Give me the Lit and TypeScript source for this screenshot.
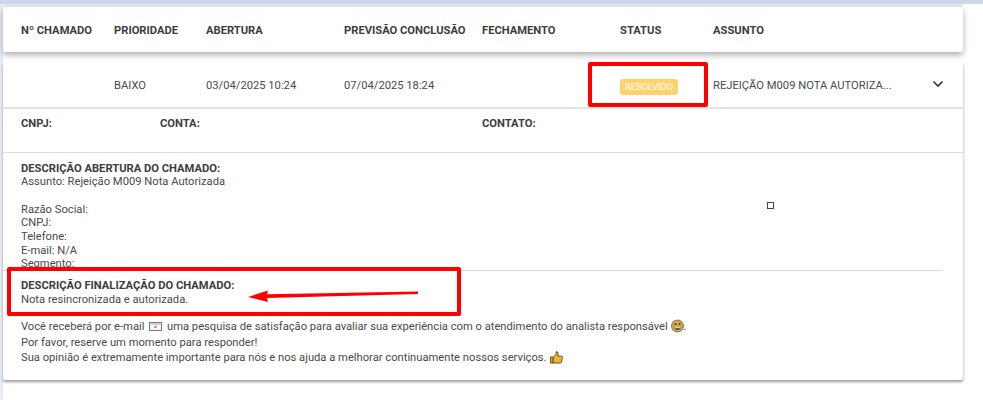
import { LitElement, html, css, svg } from "lit";
import { customElement } from "lit/decorators.js";

const COLS = [
  { label: "Nº CHAMADO", value: "" },
  { label: "PRIORIDADE", value: "BAIXO" },
  { label: "ABERTURA", value: "03/04/2025 10:24" },
  { label: "PREVISÃO CONCLUSÃO", value: "07/04/2025 18:24" },
  { label: "FECHAMENTO", value: "" },
];

@customElement("app-root")
export class AppRoot extends LitElement {
  static styles = css`
    :host {
      display: block;
      position: relative;
      width: 983px;
      height: 400px;
      overflow: hidden;
      background: #fff;
      font-family: Roboto, "Liberation Sans", sans-serif;
      font-size: 11.2px;
      color: #4a4a4a;
    }
    .top { height: 4px; background: #cdd7e7; }
    .sub { height: 3px; margin-right: 20px; background: #e6ebf3; }
    .wrap {
      width: 960px;
      padding-left: 3px;
      background: linear-gradient(#e8edf5, #e8edf5) left / 3px 100% no-repeat;
      padding-bottom: 25px;
    }
    .card { background: #fff; border-radius: 2px; }
    .head {
      height: 45px;
      box-shadow: 0 3px 6px rgba(0, 0, 0, 0.32);
      position: relative;
    }
    .grid {
      display: grid;
      grid-template-columns: 93px 92px 138px 138px 138px 93px 1fr;
      padding-left: 18px;
      align-items: center;
      height: 100%;
    }
    .head .grid { font-weight: 700; color: #3d3d3d; padding-top: 1px; box-sizing: border-box; }
    .gap { height: 10px; }
    .body { box-shadow: 0 2px 3px rgba(0, 0, 0, 0.4); height: 318px; }
    .row { height: 45px; border-bottom: 2px solid #e4e4e4; box-sizing: content-box; }
    .row .cell { padding-top: 1px; }
    .subject { display: flex; align-items: center; justify-content: space-between; padding-right: 19px; }
    .badge {
      display: inline-block;
      background: #ffd36b;
      color: #fff;
      border-radius: 3px;
      font-size: 9.3px;
      line-height: 16px;
      padding: 0 5px;
      margin-top: 3px;
    }
    .chev { width: 12px; height: 8px; display: block; margin-top: -3px; }
    .info {
      border-bottom: 1px solid #dcdcdc;
      display: grid;
      grid-template-columns: 139px 322px 1fr;
      padding: 8px 0 0 18px;
      box-sizing: border-box;
      height: 44px;
      font-weight: 700;
      color: #3d3d3d;
      line-height: 14px;
    }
    .desc { padding: 8.5px 0 0 18px; line-height: 13.7px; height: 117px; box-sizing: border-box; }
    .t { font-weight: 700; color: #3d3d3d; }
    .rule { height: 1px; width: 940px; background: #dcdcdc; }
    .final { padding: 8px 0 0 18px; line-height: 14px; height: 45px; box-sizing: border-box; }
    .msg { padding: 3px 0 0 18px; line-height: 15.5px; }
    .msg svg { vertical-align: 1px; margin: -4px 0; }
    .msg svg.thumb { margin-left: 1px; }
    .msg svg.mail { vertical-align: -1px; margin: 0 2px; width: 13px; height: 9px; }
    .box {
      position: absolute;
      border: 4px solid #f00;
      border-radius: 2px;
      box-sizing: border-box;
    }
    .b1 { left: 588px; top: 62px; width: 120px; height: 45px; }
    .b2 { left: 7px; top: 267px; width: 454px; height: 49px; }
    .arrow { position: absolute; left: 248px; top: 288px; width: 172px; height: 16px; }
    .sq {
      position: absolute;
      left: 767px;
      top: 202px;
      width: 7px;
      height: 7px;
      box-sizing: border-box;
      border: 1px solid #444;
      background: #fff;
    }
  `;

  private icons = {
    grin: svg`<circle cx="7" cy="7" r="6.400" fill="#d9a93a" stroke="#6b6b6b" stroke-width="1"/><circle cx="4.800" cy="5" r="1" fill="#333"/><circle cx="9.200" cy="5" r="1" fill="#333"/><path d="M3.500 8h7c0 2.200-1.500 3.400-3.500 3.400S3.500 10.200 3.500 8z" fill="#555"/><path d="M4 8.300h6v1H4z" fill="#eee"/>`,
    thumb: svg`<path d="M.5 7h3v6.500h-3z" fill="#e5a92a" stroke="#5b4a20"/><path d="M3.500 7.500 6.500 4V1.500c1.500-.8 2.500.6 2.300 2L8.300 6h4c1.300 0 1.500 1.300 1 2l-1 4.500c-.2.700-.7 1-1.300 1H3.500z" fill="#f0b52e" stroke="#5b4a20"/>`,
  };

  render() {
    return html`
      <div class="top"></div>
      <div class="sub"></div>
      <div class="wrap">
        <div class="card head">
          <div class="grid">
            ${COLS.map((c) => html`<div>${c.label}</div>`)}
            <div>STATUS</div>
            <div>ASSUNTO</div>
          </div>
        </div>
        <div class="gap"></div>
        <div class="card body">
          <div class="row">
            <div class="grid">
              ${COLS.map((c) => html`<div class="cell">${c.value}</div>`)}
              <div class="cell"><span class="badge">RESOLVIDO</span></div>
              <div class="cell subject">
                <span>REJEIÇÃO M009 NOTA AUTORIZA...</span>
                <svg class="chev" viewBox="0 0 12 8"><path d="M1.500 1.500 6 6l4.500-4.500" fill="none" stroke="#333" stroke-width="1.600"/></svg>
              </div>
            </div>
          </div>
          <div class="info">
            <div>CNPJ:</div>
            <div>CONTA:</div>
            <div>CONTATO:</div>
          </div>
          <div class="desc">
            <div class="t">DESCRIÇÃO ABERTURA DO CHAMADO:</div>
            <div>Assunto: Rejeição M009 Nota Autorizada</div>
            <br />
            <div>Razão Social:</div>
            <div>CNPJ:</div>
            <div>Telefone:</div>
            <div>E-mail: N/A</div>
            <div>Segmento:</div>
          </div>
          <div class="rule"></div>
          <div class="final">
            <div class="t">DESCRIÇÃO FINALIZAÇÃO DO CHAMADO:</div>
            <div>Nota resincronizada e autorizada.</div>
          </div>
          <div class="msg">
            <div>Você receberá por e-mail
              <svg class="mail" viewBox="0 0 13 9"><rect x=".5" y=".5" width="12" height="8" fill="#f6f6f6" stroke="#777"/><path d="M1.500 1.500h10v1h-10z" fill="#aaa"/><rect x="5.500" y="4" width="2" height="2" fill="#e0614f"/></svg>
              uma pesquisa de satisfação para avaliar sua experiência com o atendimento do analista responsável
              <svg width="13" height="14" viewBox="0 0 14 14">${this.icons.grin}</svg>.</div>
            <div>Por favor, reserve um momento para responder!</div>
            <div>Sua opinião é extremamente importante para nós e nos ajuda a melhorar continuamente nossos serviços.
              <svg class="thumb" width="13" height="14" viewBox="0 0 14 14">${this.icons.thumb}</svg></div>
          </div>
        </div>
      </div>
      <div class="box b1"></div>
      <div class="box b2"></div>
      <svg class="arrow" viewBox="0 0 172 16"><path d="M0 9 20 2.500l-1 3.700L170 3.500v2.500L19 10l1 4z" fill="#f00"/></svg>
      <div class="sq"></div>
    `;
  }
}
